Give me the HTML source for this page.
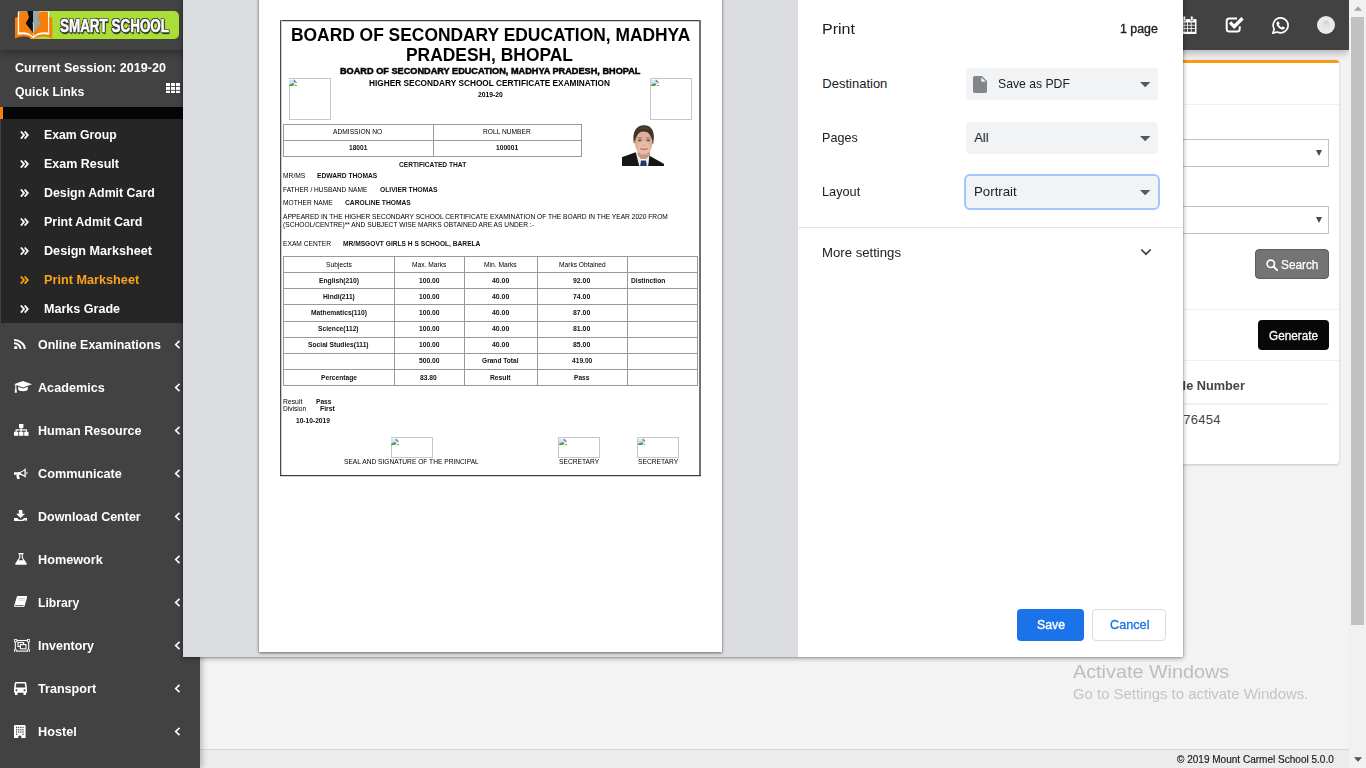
<!DOCTYPE html>
<html><head><meta charset="utf-8"><title>Print Marksheet</title>
<style>
*{box-sizing:border-box;margin:0;padding:0}
html,body{width:1366px;height:768px;overflow:hidden;background:#f3f3f3;font-family:"Liberation Sans",sans-serif;color:#444}
.a{position:absolute}
.t{position:absolute;white-space:nowrap;line-height:1}
/* ---------- app background ---------- */
#topbar{left:200px;top:0;width:1149px;height:50px;background:#424242;box-shadow:0 3px 8px rgba(0,0,0,.28)}
#sidebar{left:0;top:0;width:200px;height:768px;background:#424242;box-shadow:2px 0 6px rgba(0,0,0,.25)}
#sidehead{left:0;top:0;width:200px;height:50px;background:#424242;box-shadow:0 3px 7px rgba(0,0,0,.30)}
#footer{left:200px;top:749px;width:1149px;height:19px;background:#ececec;border-top:1px solid #d2d6de}
#scroll{left:1349px;top:0;width:17px;height:768px;background:#f1f1f1}
#thumb{left:1351px;top:17px;width:13px;height:608px;background:#c1c1c1}
.sub{font-size:14px;font-weight:bold;color:#fff;left:44px}
.main{font-size:14px;font-weight:bold;color:#fff;left:38px}
.tri{width:0;height:0;border-left:3.500px solid transparent;border-right:3.500px solid transparent;border-top:6px solid #4a4a4a}
/* ---------- dialog ---------- */
#dialog{left:183px;top:0;width:1000px;height:657px;background:#fff;box-shadow:0 0 1px rgba(0,0,0,.5),0 1px 5px rgba(0,0,0,.42)}
#preview{left:0;top:0;width:615px;height:657px;background:#dadce0;overflow:hidden}
#paper{left:76px;top:-4px;width:463px;height:656px;background:#fff;box-shadow:0 0 1px rgba(0,0,0,.35),0 1px 3px rgba(0,0,0,.5)}
#panel{left:615px;top:0;width:385px;height:657px;background:#fff}
.d{transform-origin:0 0}
.lbl{font-size:13px;color:#202124;left:24px}
.sel{left:168px;width:192px;height:32px;background:#f1f3f4;border-radius:4px}
.sel .t{font-size:13px;color:#202124;top:10px}
.caret{position:absolute;right:8px;top:14px;width:0;height:0;border-left:5px solid transparent;border-right:5px solid transparent;border-top:5px solid #474747}
</style></head><body>

<!-- page content behind dialog -->
<div class="a" id="card" style="left:900px;top:60px;width:439px;height:404px;background:#fff;border-top:3px solid #f89c13;border-radius:3px;box-shadow:0 1px 3px rgba(0,0,0,.2)"></div>
<div class="a" style="left:900px;top:104px;width:439px;height:1px;background:#f0f0f0"></div>
<div class="a" style="left:900px;top:139px;width:429px;height:28px;border:1px solid #c2c2c2;background:#fff"></div>
<div class="a" style="left:900px;top:206px;width:429px;height:28px;border:1px solid #c2c2c2;background:#fff"></div>
<div class="a tri" style="left:1316px;top:150px"></div><div class="a tri" style="left:1316px;top:217px"></div>
<div class="a" style="left:1255px;top:249px;width:74px;height:30px;background:#747474;border:1px solid #5e5e5e;border-radius:4px"></div>
<svg class="a" style="left:1266px;top:259px" width="12" height="12" viewBox="0 0 12 12"><circle cx="4.800" cy="4.800" r="3.700" fill="none" stroke="#fff" stroke-width="1.700"/><path d="M7.500 7.500L11 11" stroke="#fff" stroke-width="2" stroke-linecap="round"/></svg>
<div class="t" id="srch" style="left:1280.500px;top:258.500px;font-size:12.500px;color:#fff;-webkit-text-stroke:.25px #fff;transform:scaleX(.945);transform-origin:0 0">Search</div>
<div class="a" style="left:900px;top:309px;width:439px;height:1px;background:#f0f0f0"></div>
<div class="a" style="left:1258px;top:320px;width:71px;height:30px;background:#080808;border-radius:4px"></div>
<div class="t" id="gen" style="left:1269px;top:329.500px;font-size:12.500px;color:#fff;-webkit-text-stroke:.3px #fff;transform:scaleX(.94);transform-origin:0 0">Generate</div>
<div class="a" style="left:900px;top:360px;width:439px;height:1px;background:#f0f0f0"></div>
<div class="t" id="mob" style="right:121px;top:379px;font-size:13px;font-weight:bold;color:#444;transform:scaleX(.98);transform-origin:100% 0">Mobile Number</div>
<div class="a" style="left:900px;top:403px;width:429px;height:2px;background:#f2f2f2"></div>
<div class="t" id="num" style="right:145.200px;top:412.500px;font-size:13px;color:#444;letter-spacing:.28px">9067876454</div>
<div class="t" id="wm1" style="left:1073px;top:662.500px;font-size:18.500px;color:#bdbdbd;transform:scaleX(1.07);transform-origin:0 0">Activate Windows</div>
<div class="t" id="wm2" style="left:1073px;top:686.800px;font-size:14.500px;color:#c4c4c4;transform:scaleX(1.028);transform-origin:0 0">Go to Settings to activate Windows.</div>
<div class="a" id="topbar"></div>
<svg class="a" style="left:1179px;top:16px" width="18" height="18" viewBox="0 0 18 18"><path d="M1.500 3h15c.6 0 1 .4 1 1v13c0 .6-.4 1-1 1h-15c-.6 0-1-.4-1-1V4c0-.6.400-1 1-1z" fill="#fff"/><g fill="#424242"><rect x="2" y="6.500" width="2.600" height="2.300"/><rect x="5.400" y="6.500" width="2.800" height="2.300"/><rect x="9" y="6.500" width="2.800" height="2.300"/><rect x="12.600" y="6.500" width="3.400" height="2.300"/><rect x="2" y="9.600" width="2.600" height="2.600"/><rect x="5.400" y="9.600" width="2.800" height="2.600"/><rect x="9" y="9.600" width="2.800" height="2.600"/><rect x="12.600" y="9.600" width="3.400" height="2.600"/><rect x="2" y="13" width="2.600" height="2.800"/><rect x="5.400" y="13" width="2.800" height="2.800"/><rect x="9" y="13" width="2.800" height="2.800"/><rect x="12.600" y="13" width="3.400" height="2.800"/></g><rect x="4" y="0" width="2.600" height="5" rx="1.200" fill="#fff" stroke="#424242" stroke-width=".7"/><rect x="11.500" y="0" width="2.600" height="5" rx="1.200" fill="#fff" stroke="#424242" stroke-width=".7"/></svg>
<svg class="a" style="left:1225px;top:16px" width="19" height="17" viewBox="0 0 19 17"><path d="M12 2.400H4.200c-1.400 0-2.500 1.100-2.500 2.500v8c0 1.400 1.100 2.500 2.500 2.500h8c1.400 0 2.500-1.100 2.500-2.500V10.300" fill="none" stroke="#fff" stroke-width="2"/><path d="M3.900 7.600l2.300-2.300 3 3L16.300 1l2.400 2.400-9.500 9.700z" fill="#fff"/></svg>
<svg class="a" style="left:1272px;top:17px" width="17" height="17" viewBox="0 0 17 17"><path d="M8.700.8a7.500 7.500 0 0 0-6.500 11.300L.9 16.200l4.300-1.200A7.500 7.500 0 1 0 8.700.8z" fill="none" stroke="#fff" stroke-width="1.700"/><path d="M5.600 4.600c.3-.3.800-.3 1 0l.9 1.600c.1.300.1.600-.1.800l-.6.700c.6 1.200 1.500 2.100 2.700 2.700l.7-.700c.2-.2.600-.3.800-.1l1.600.9c.300.200.400.600.1 1-.7 1-1.700 1.300-2.800 1-2.600-.7-4.700-2.800-5.400-5.300-.2-1 .2-1.900 1.100-2.600z" fill="#fff"/></svg>
<div class="a" style="left:1317px;top:16px;width:18px;height:18px;border-radius:9px;background:#e9e9e9"></div>
<svg class="a" style="left:1321px;top:19px" width="10" height="11" viewBox="0 0 10 11"><path d="M2.500 3.500a2.500 2 0 0 1 5 0v1h-5z" fill="#d2d2d2"/><rect x="1.500" y="4.600" width="7" height=".9" fill="#cfcfcf"/><rect x=".5" y="7" width="9" height=".8" fill="#dcdcdc"/><rect x="2" y="9" width="6" height=".7" fill="#e0e0e0"/></svg>
<div class="a" id="footer"><div class="t" id="ftxt" style="left:977px;top:3.700px;font-size:11.500px;color:#222;-webkit-text-stroke:.2px #222;transform:scaleX(.872);transform-origin:0 0">© 2019 Mount Carmel School 5.0.0</div></div>

<div class="a" id="sidebar"></div>
<div class="a" id="sidehead"></div>
<!--SIDE-->
<div class="a" id="logo" style="left:30px;top:10.800px;width:149px;height:28.500px;background:#a9de37;border-radius:0 5px 5px 0"></div>
<div class="t" id="logot" style="left:60px;top:17.700px;font-size:17.500px;font-weight:bold;color:#fff;-webkit-text-stroke:.5px #fff;transform:scaleX(.768);transform-origin:0 0;text-shadow:1px 0 0 #333,-1px 0 0 #333,0 1px 0 #333,0 -1px 0 #333,1px 1px 0 #333,-1px 1px 0 #333,1px -1px 0 #333,-1px -1px 0 #333,1px 2px 1px #222">SMART SCHOOL</div>
<svg class="a" style="left:15px;top:11px" width="38" height="30" viewBox="0 0 38 30"><path d="M0 6.500L3.500 6H34l3.300.500V27.400C30 24.400 22.500 24.800 18.300 28.600 14.200 24.800 7.500 24.400 0 27.400z" fill="#f57f0b"/><path d="M2.800.4H34.200V23.700C27 22.300 21.500 23.600 18.300 27.400 15.200 23.600 10 22.300 2.800 23.700z" fill="#fff"/><path d="M4.100 1.100C8 .3 11 .5 13 1.300H18V25.600C15 21.800 10 20.600 4.100 21.500z" fill="#f57f0b"/><path d="M33.100 1.100C29 .3 26 .5 24 1.300H18.600V25.600C21.600 21.800 27 20.600 33.100 21.500z" fill="#f57f0b"/><path d="M12.200 0H18.300V22.300L10.600 12.300 14 6.500z" fill="#0d0d0d"/><path d="M18.300 0H24.600L23 6.500 25.500 12.300 18.300 22.300z" fill="#93a7ad"/><path d="M17.900 11.300a.9.900 0 1 0 .8 0V21h-.8z" fill="#eee"/></svg>
<div class="t" style="left:14.9px;top:60.66px;font-size:13.4px;font-weight:bold;color:#fff;transform:scaleX(0.9387);transform-origin:0 0">Current Session: 2019-20</div>
<div class="t" style="left:14.9px;top:84.56px;font-size:13.4px;font-weight:bold;color:#fff;transform:scaleX(0.9143);transform-origin:0 0">Quick Links</div>
<svg class="a" style="left:165.800px;top:82.600px" width="14" height="10.800" viewBox="0 0 14 10.800"><g fill="#fff"><rect x="0" y="0" width="4" height="3"/><rect x="5" y="0" width="4" height="3"/><rect x="10" y="0" width="4" height="3"/><rect x="0" y="3.900" width="4" height="3"/><rect x="5" y="3.900" width="4" height="3"/><rect x="10" y="3.900" width="4" height="3"/><rect x="0" y="7.800" width="4" height="3"/><rect x="5" y="7.800" width="4" height="3"/><rect x="10" y="7.800" width="4" height="3"/></g></svg>
<div class="a" style="left:0;top:107px;width:200px;height:12px;background:#060606;border-left:3px solid #f5810c"></div>
<div class="a" style="left:1px;top:119px;width:199px;height:204px;background:#262626"></div>
<svg class="a" style="left:20px;top:131px" width="8.800" height="8.200" viewBox="0 0 8.500 8"><path d="M.8.500L3.900 4 .8 7.500M4.500.5L7.600 4 4.500 7.500" fill="none" stroke="#fff" stroke-width="1.700"/></svg>
<div class="t" style="left:44.4px;top:127.66px;font-size:13.4px;font-weight:bold;color:#fff;transform:scaleX(0.9144);transform-origin:0 0">Exam Group</div>
<svg class="a" style="left:20px;top:160px" width="8.800" height="8.200" viewBox="0 0 8.500 8"><path d="M.8.500L3.900 4 .8 7.500M4.500.5L7.600 4 4.500 7.500" fill="none" stroke="#fff" stroke-width="1.700"/></svg>
<div class="t" style="left:44.4px;top:156.66px;font-size:13.4px;font-weight:bold;color:#fff;transform:scaleX(0.9331);transform-origin:0 0">Exam Result</div>
<svg class="a" style="left:20px;top:189px" width="8.800" height="8.200" viewBox="0 0 8.500 8"><path d="M.8.500L3.900 4 .8 7.500M4.500.5L7.600 4 4.500 7.500" fill="none" stroke="#fff" stroke-width="1.700"/></svg>
<div class="t" style="left:44.4px;top:185.66px;font-size:13.4px;font-weight:bold;color:#fff;transform:scaleX(0.9226);transform-origin:0 0">Design Admit Card</div>
<svg class="a" style="left:20px;top:218px" width="8.800" height="8.200" viewBox="0 0 8.500 8"><path d="M.8.500L3.900 4 .8 7.500M4.500.5L7.600 4 4.500 7.500" fill="none" stroke="#fff" stroke-width="1.700"/></svg>
<div class="t" style="left:44.4px;top:214.66px;font-size:13.4px;font-weight:bold;color:#fff;transform:scaleX(0.9296);transform-origin:0 0">Print Admit Card</div>
<svg class="a" style="left:20px;top:247px" width="8.800" height="8.200" viewBox="0 0 8.500 8"><path d="M.8.500L3.900 4 .8 7.500M4.500.5L7.600 4 4.500 7.500" fill="none" stroke="#fff" stroke-width="1.700"/></svg>
<div class="t" style="left:44.4px;top:243.66px;font-size:13.4px;font-weight:bold;color:#fff;transform:scaleX(0.9424);transform-origin:0 0">Design Marksheet</div>
<svg class="a" style="left:20px;top:276px" width="8.800" height="8.200" viewBox="0 0 8.500 8"><path d="M.8.500L3.900 4 .8 7.500M4.500.5L7.600 4 4.500 7.500" fill="none" stroke="#faa21c" stroke-width="1.700"/></svg>
<div class="t" style="left:44.4px;top:272.66px;font-size:13.4px;font-weight:bold;color:#faa21c;transform:scaleX(0.9476);transform-origin:0 0">Print Marksheet</div>
<svg class="a" style="left:20px;top:305px" width="8.800" height="8.200" viewBox="0 0 8.500 8"><path d="M.8.500L3.900 4 .8 7.500M4.500.5L7.600 4 4.500 7.500" fill="none" stroke="#fff" stroke-width="1.700"/></svg>
<div class="t" style="left:44.4px;top:301.66px;font-size:13.4px;font-weight:bold;color:#fff;transform:scaleX(0.9380);transform-origin:0 0">Marks Grade</div>
<svg class="a" style="left:14.2px;top:338.8px" width="12" height="10.3" viewBox="0 0 12 10.3"><circle cx="1.700" cy="8.600" r="1.700" fill="#fff"/><path d="M0 4.300a6.600 5.900 0 0 1 6.600 5.900" fill="none" stroke="#fff" stroke-width="2.100"/><path d="M0 1a10.800 9.200 0 0 1 10.800 9.200" fill="none" stroke="#fff" stroke-width="2"/></svg>
<div class="t" style="left:38.2px;top:337.66px;font-size:13.4px;font-weight:bold;color:#fff;transform:scaleX(0.9279);transform-origin:0 0">Online Examinations</div>
<svg class="a" style="left:173.800px;top:339.8px" width="7" height="9" viewBox="0 0 7 9"><path d="M5.500.8L1.700 4.500l3.800 3.700" fill="none" stroke="#fff" stroke-width="1.650"/></svg>
<svg class="a" style="left:14.2px;top:381.1px" width="18" height="12" viewBox="0 0 18 12"><path d="M0 3.200L9 0l9 3.200L9 6.400z" fill="#fff"/><path d="M4.200 5.700v2.500c0 1.200 2.200 2 4.800 2s4.800-.8 4.800-2V5.700L9 7.500z" fill="#fff"/><path d="M1.800 4v5" stroke="#fff" stroke-width="1.100"/><path d="M1 8.300h1.600l.3 3.500H.7z" fill="#fff"/></svg>
<div class="t" style="left:38.2px;top:380.66px;font-size:13.4px;font-weight:bold;color:#fff;transform:scaleX(0.9433);transform-origin:0 0">Academics</div>
<svg class="a" style="left:173.800px;top:382.8px" width="7" height="9" viewBox="0 0 7 9"><path d="M5.500.8L1.700 4.500l3.800 3.700" fill="none" stroke="#fff" stroke-width="1.650"/></svg>
<svg class="a" style="left:14.2px;top:424.4px" width="14.5" height="11.8" viewBox="0 0 14.5 11.8"><rect x="5" y="0" width="4.400" height="4" fill="#fff"/><rect x="0" y="7.800" width="4.300" height="4" fill="#fff"/><rect x="5.100" y="7.800" width="4.300" height="4" fill="#fff"/><rect x="10.200" y="7.800" width="4.300" height="4" fill="#fff"/><path d="M7.200 4v4M2.100 8V5.900h10.200V8" fill="none" stroke="#fff" stroke-width="1.200"/></svg>
<div class="t" style="left:38.2px;top:423.66px;font-size:13.4px;font-weight:bold;color:#fff;transform:scaleX(0.9407);transform-origin:0 0">Human Resource</div>
<svg class="a" style="left:173.800px;top:425.8px" width="7" height="9" viewBox="0 0 7 9"><path d="M5.500.8L1.700 4.500l3.800 3.700" fill="none" stroke="#fff" stroke-width="1.650"/></svg>
<svg class="a" style="left:14.2px;top:467.5px" width="14.5" height="11.5" viewBox="0 0 14.500 11.5"><path d="M0 4.300h3.500C7 4.100 9.500 2.400 11.700 0V9.800C9.500 7.700 7 6.700 3.500 6.700H0z" fill="#fff"/><path d="M2.200 6.800l1 4.700h2.700L4.800 6.800z" fill="#fff"/><path d="M12.500 3.400a1.800 1.800 0 0 1 0 3.300z" fill="#fff"/><path d="M6.600 4.700C8 4.300 9.300 3.500 10.400 2.500V7.400C9.300 6.500 8 5.900 6.600 5.600z" fill="#424242"/></svg>
<div class="t" style="left:38.2px;top:466.66px;font-size:13.4px;font-weight:bold;color:#fff;transform:scaleX(0.9476);transform-origin:0 0">Communicate</div>
<svg class="a" style="left:173.800px;top:468.8px" width="7" height="9" viewBox="0 0 7 9"><path d="M5.500.8L1.700 4.500l3.800 3.700" fill="none" stroke="#fff" stroke-width="1.650"/></svg>
<svg class="a" style="left:14.2px;top:509.5px" width="13.2" height="11.7" viewBox="0 0 13.2 11.7"><path d="M4.800 0h3.600v3.800h2.700L6.600 8 2.100 3.800h2.700z" fill="#fff"/><path d="M0 8h3.200l1.800 1.700h3.200L10 8h3.200v3.700H0z" fill="#fff"/><rect x="9.700" y="9.800" width="1" height="1" fill="#424242"/><rect x="11.300" y="9.800" width="1" height="1" fill="#424242"/></svg>
<div class="t" style="left:38.2px;top:509.66px;font-size:13.4px;font-weight:bold;color:#fff;transform:scaleX(0.9327);transform-origin:0 0">Download Center</div>
<svg class="a" style="left:173.800px;top:511.8px" width="7" height="9" viewBox="0 0 7 9"><path d="M5.500.8L1.700 4.500l3.800 3.700" fill="none" stroke="#fff" stroke-width="1.650"/></svg>
<svg class="a" style="left:15px;top:553.4px" width="12" height="11.7" viewBox="0 0 12 11.700"><path d="M3.500 0h5v1.200h-.7v3.300L11.700 10.400c.5.800 0 1.300-.8 1.300H1.100c-.8 0-1.300-.5-.8-1.300L4.200 4.500V1.200h-.7z" fill="#fff"/><path d="M5.300 1.200h1.400v3.600l1.500 2.500H3.800l1.500-2.500z" fill="#424242"/></svg>
<div class="t" style="left:38.2px;top:552.66px;font-size:13.4px;font-weight:bold;color:#fff;transform:scaleX(0.9466);transform-origin:0 0">Homework</div>
<svg class="a" style="left:173.800px;top:554.8px" width="7" height="9" viewBox="0 0 7 9"><path d="M5.500.8L1.700 4.500l3.800 3.700" fill="none" stroke="#fff" stroke-width="1.650"/></svg>
<svg class="a" style="left:14.2px;top:596.0px" width="13.2" height="12.3" viewBox="0 0 13.2 12.3"><path d="M3.800 0h8.600c.6 0 .9.500.7 1.100l-2.500 9c-.2.600-.8 1-1.400 1H1.300c-.9 0-1.400-.7-1.100-1.500L2.700 1.200C2.900.5 3.200 0 3.800 0z" fill="#fff"/><path d="M1.200 9.700h8.300" stroke="#424242" stroke-width=".9"/><path d="M4.800 2.500h6M4.300 4.100h6" stroke="#bbb" stroke-width=".7"/></svg>
<div class="t" style="left:38.2px;top:595.66px;font-size:13.4px;font-weight:bold;color:#fff;transform:scaleX(0.9098);transform-origin:0 0">Library</div>
<svg class="a" style="left:173.800px;top:597.8px" width="7" height="9" viewBox="0 0 7 9"><path d="M5.500.8L1.700 4.500l3.800 3.700" fill="none" stroke="#fff" stroke-width="1.650"/></svg>
<svg class="a" style="left:14.2px;top:638.6px" width="16.1" height="13.6" viewBox="0 0 16.1 13.6"><rect x="1.300" y="1.500" width="13.400" height="10.600" fill="none" stroke="#fff" stroke-width="1.100"/><rect x=".4" y=".4" width="2.400" height="2.400" fill="#424242" stroke="#fff" stroke-width=".8"/><rect x="13.300" y=".4" width="2.400" height="2.400" fill="#424242" stroke="#fff" stroke-width=".8"/><rect x=".4" y="10.800" width="2.400" height="2.400" fill="#424242" stroke="#fff" stroke-width=".8"/><rect x="13.300" y="10.800" width="2.400" height="2.400" fill="#424242" stroke="#fff" stroke-width=".8"/><rect x="4" y="3.500" width="5.600" height="4" fill="none" stroke="#fff" stroke-width="1.100"/><rect x="6.400" y="5.600" width="5.600" height="4.200" fill="#424242" stroke="#fff" stroke-width="1.100"/></svg>
<div class="t" style="left:38.2px;top:638.66px;font-size:13.4px;font-weight:bold;color:#fff;transform:scaleX(0.9291);transform-origin:0 0">Inventory</div>
<svg class="a" style="left:173.800px;top:640.8px" width="7" height="9" viewBox="0 0 7 9"><path d="M5.500.8L1.700 4.500l3.800 3.700" fill="none" stroke="#fff" stroke-width="1.650"/></svg>
<svg class="a" style="left:14.2px;top:681.5px" width="13" height="13.5" viewBox="0 0 13 13.500"><path d="M2.200 0h8.600c.8 0 1.300.5 1.500 1.300L13 6.500v4.300h-1v1.800c0 .5-.4.900-.9.900h-.7c-.5 0-.9-.4-.9-.9v-1.800h-6v1.800c0 .5-.4.900-.9.900h-.7c-.5 0-.9-.4-.9-.9v-1.800H0V6.500L.7 1.300C.9.500 1.400 0 2.200 0z" fill="#fff"/><path d="M2.300 1.600h8.400l.6 4H1.700z" fill="#424242"/><circle cx="2.500" cy="8.300" r="1" fill="#424242"/><circle cx="10.500" cy="8.300" r="1" fill="#424242"/></svg>
<div class="t" style="left:38.2px;top:681.66px;font-size:13.4px;font-weight:bold;color:#fff;transform:scaleX(0.9408);transform-origin:0 0">Transport</div>
<svg class="a" style="left:173.800px;top:683.8px" width="7" height="9" viewBox="0 0 7 9"><path d="M5.500.8L1.700 4.500l3.800 3.700" fill="none" stroke="#fff" stroke-width="1.650"/></svg>
<svg class="a" style="left:14.2px;top:724.7px" width="11.6" height="13.3" viewBox="0 0 11.6 13.3"><path d="M.8 0h10c.4 0 .8.300.8.800v12.500H7.300v-2.500h-3v2.500H0V.8C0 .3.400 0 .8 0z" fill="#fff"/><g fill="#424242"><rect x="2" y="1.800" width="1.200" height="1.300"/><rect x="4.100" y="1.800" width="1.200" height="1.300"/><rect x="6.300" y="1.800" width="1.200" height="1.300"/><rect x="8.400" y="1.800" width="1.200" height="1.300"/><rect x="2" y="4.100" width="1.200" height="1.300"/><rect x="4.100" y="4.100" width="1.200" height="1.300"/><rect x="6.300" y="4.100" width="1.200" height="1.300"/><rect x="8.400" y="4.100" width="1.200" height="1.300"/><rect x="2" y="6.400" width="1.200" height="1.300"/><rect x="4.100" y="6.400" width="1.200" height="1.300"/><rect x="6.300" y="6.400" width="1.200" height="1.300"/><rect x="8.400" y="6.400" width="1.200" height="1.300"/><rect x="2" y="8.700" width="1.200" height="1.300"/><rect x="8.400" y="8.700" width="1.200" height="1.300"/></g></svg>
<div class="t" style="left:38.2px;top:724.66px;font-size:13.4px;font-weight:bold;color:#fff;transform:scaleX(0.9505);transform-origin:0 0">Hostel</div>
<svg class="a" style="left:173.800px;top:726.8px" width="7" height="9" viewBox="0 0 7 9"><path d="M5.500.8L1.700 4.500l3.800 3.700" fill="none" stroke="#fff" stroke-width="1.650"/></svg>
<!--/SIDE-->

<div class="a" id="scroll"></div>
<div class="a" id="thumb"></div>
<svg class="a" style="left:1353.500px;top:6.300px" width="8" height="5" viewBox="0 0 8 5"><path d="M0 4.700L4 .3l4 4.400z" fill="#a3a3a3"/></svg>
<svg class="a" style="left:1353.500px;top:757px" width="8" height="5" viewBox="0 0 8 5"><path d="M0 .3L4 4.700 8 .3z" fill="#505050"/></svg>

<!-- print dialog -->
<div class="a" id="dialog">
  <div class="a" id="preview">
    <div class="a" id="paper"></div>
<!--DOC--><div class="a" id="doc" style="left:-183px;top:0;width:1366px;height:768px">
<div class="a" style="left:280px;top:20px;width:421px;height:2px;background:linear-gradient(#414141 50%,#d2d2d2 50%)"></div>
<div class="a" style="left:280px;top:20px;width:2px;height:456px;background:linear-gradient(90deg,#4d4d4d 50%,#c8c8c8 50%)"></div>
<div class="a" style="left:699px;top:20px;width:2px;height:456px;background:#737373"></div>
<div class="a" style="left:280px;top:475px;width:421px;height:2px;background:linear-gradient(#393939 50%,#d6d6d6 50%)"></div>
<div class="a" style="left:283.0px;top:124.00px;width:299.00px;height:1px;background:#999"></div>
<div class="a" style="left:283.0px;top:139.80px;width:299.00px;height:1px;background:#999"></div>
<div class="a" style="left:283.0px;top:155.80px;width:299.00px;height:1px;background:#999"></div>
<div class="a" style="left:283.00px;top:124.5px;width:1px;height:31.80px;background:#999"></div>
<div class="a" style="left:433.00px;top:124.5px;width:1px;height:31.80px;background:#999"></div>
<div class="a" style="left:581.10px;top:124.5px;width:1px;height:31.80px;background:#999"></div>
<div class="a" style="left:283.0px;top:256.00px;width:414.80px;height:1px;background:#999"></div>
<div class="a" style="left:283.0px;top:272.00px;width:414.80px;height:1px;background:#999"></div>
<div class="a" style="left:283.0px;top:287.90px;width:414.80px;height:1px;background:#999"></div>
<div class="a" style="left:283.0px;top:304.00px;width:414.80px;height:1px;background:#999"></div>
<div class="a" style="left:283.0px;top:320.70px;width:414.80px;height:1px;background:#999"></div>
<div class="a" style="left:283.0px;top:336.90px;width:414.80px;height:1px;background:#999"></div>
<div class="a" style="left:283.0px;top:352.90px;width:414.80px;height:1px;background:#999"></div>
<div class="a" style="left:283.0px;top:369.10px;width:414.80px;height:1px;background:#999"></div>
<div class="a" style="left:283.0px;top:384.90px;width:414.80px;height:1px;background:#999"></div>
<div class="a" style="left:283.00px;top:256.5px;width:1px;height:128.90px;background:#999"></div>
<div class="a" style="left:394.00px;top:256.5px;width:1px;height:128.90px;background:#999"></div>
<div class="a" style="left:463.80px;top:256.5px;width:1px;height:128.90px;background:#999"></div>
<div class="a" style="left:536.80px;top:256.5px;width:1px;height:128.90px;background:#999"></div>
<div class="a" style="left:627.20px;top:256.5px;width:1px;height:128.90px;background:#999"></div>
<div class="a" style="left:696.80px;top:256.5px;width:1px;height:128.90px;background:#999"></div>
<div class="a" style="left:288.7px;top:78.2px;width:42.2px;height:41.8px;border:1px solid #c6c6c6;background:#fff"></div>
<svg class="a" style="left:289.40px;top:78.80px" width="7.700" height="7.400" viewBox="0 0 7.700 7.400"><path d="M0 .4h5.200l2.500 2.600v4.400H0z" fill="#fff"/><path d="M.2 .9h4.800l1.700 2v2.200L4 5.600.2 6.800z" fill="#c6daf9"/><path d="M.8 1.500h2.800v1.300H.8z" fill="#e3ecfd"/><path d="M0 7.400V6.300C1 5.200 2.300 4.500 3.900 4.500c.9 0 1.500.3 1.300.9C4.700 6.500 3.200 7.400 2 7.400z" fill="#3ea42b"/><path d="M5 7.400c.5-.8 1.400-1.400 2.700-1.600v1.600z" fill="#479a35"/><path d="M4.900 .2L7.700 3v1.200l-.8-.3V3.300L5.200 3 4.700 1z" fill="#7c7f84"/></svg>
<div class="a" style="left:650.2px;top:78.2px;width:41.9px;height:41.8px;border:1px solid #c6c6c6;background:#fff"></div>
<svg class="a" style="left:650.90px;top:78.80px" width="7.700" height="7.400" viewBox="0 0 7.700 7.400"><path d="M0 .4h5.200l2.500 2.600v4.400H0z" fill="#fff"/><path d="M.2 .9h4.800l1.700 2v2.200L4 5.600.2 6.800z" fill="#c6daf9"/><path d="M.8 1.500h2.800v1.300H.8z" fill="#e3ecfd"/><path d="M0 7.400V6.300C1 5.200 2.300 4.500 3.900 4.500c.9 0 1.500.3 1.300.9C4.700 6.500 3.200 7.400 2 7.400z" fill="#3ea42b"/><path d="M5 7.400c.5-.8 1.400-1.400 2.700-1.600v1.600z" fill="#479a35"/><path d="M4.900 .2L7.700 3v1.200l-.8-.3V3.300L5.200 3 4.700 1z" fill="#7c7f84"/></svg>
<div class="a" style="left:390.6px;top:436.9px;width:42px;height:20.7px;border:1px solid #c6c6c6;background:#fff"></div>
<svg class="a" style="left:391.30px;top:437.50px" width="7.700" height="7.400" viewBox="0 0 7.700 7.400"><path d="M0 .4h5.200l2.500 2.600v4.400H0z" fill="#fff"/><path d="M.2 .9h4.800l1.700 2v2.200L4 5.600.2 6.800z" fill="#c6daf9"/><path d="M.8 1.500h2.800v1.300H.8z" fill="#e3ecfd"/><path d="M0 7.400V6.300C1 5.200 2.300 4.500 3.900 4.500c.9 0 1.500.3 1.300.9C4.700 6.500 3.200 7.400 2 7.400z" fill="#3ea42b"/><path d="M5 7.400c.5-.8 1.400-1.400 2.700-1.600v1.600z" fill="#479a35"/><path d="M4.900 .2L7.700 3v1.200l-.8-.3V3.300L5.200 3 4.700 1z" fill="#7c7f84"/></svg>
<div class="a" style="left:558.4px;top:436.9px;width:42px;height:20.7px;border:1px solid #c6c6c6;background:#fff"></div>
<svg class="a" style="left:559.10px;top:437.50px" width="7.700" height="7.400" viewBox="0 0 7.700 7.400"><path d="M0 .4h5.200l2.500 2.600v4.400H0z" fill="#fff"/><path d="M.2 .9h4.800l1.700 2v2.200L4 5.600.2 6.800z" fill="#c6daf9"/><path d="M.8 1.500h2.800v1.300H.8z" fill="#e3ecfd"/><path d="M0 7.400V6.300C1 5.200 2.300 4.500 3.900 4.500c.9 0 1.500.3 1.300.9C4.700 6.500 3.200 7.400 2 7.400z" fill="#3ea42b"/><path d="M5 7.400c.5-.8 1.400-1.400 2.700-1.600v1.600z" fill="#479a35"/><path d="M4.900 .2L7.700 3v1.200l-.8-.3V3.300L5.200 3 4.700 1z" fill="#7c7f84"/></svg>
<div class="a" style="left:637.1px;top:436.9px;width:42px;height:20.7px;border:1px solid #c6c6c6;background:#fff"></div>
<svg class="a" style="left:637.80px;top:437.50px" width="7.700" height="7.400" viewBox="0 0 7.700 7.400"><path d="M0 .4h5.200l2.500 2.600v4.400H0z" fill="#fff"/><path d="M.2 .9h4.800l1.700 2v2.200L4 5.600.2 6.800z" fill="#c6daf9"/><path d="M.8 1.500h2.800v1.300H.8z" fill="#e3ecfd"/><path d="M0 7.400V6.300C1 5.200 2.300 4.500 3.900 4.500c.9 0 1.500.3 1.300.9C4.700 6.500 3.200 7.400 2 7.400z" fill="#3ea42b"/><path d="M5 7.400c.5-.8 1.400-1.400 2.700-1.600v1.600z" fill="#479a35"/><path d="M4.900 .2L7.700 3v1.200l-.8-.3V3.300L5.200 3 4.700 1z" fill="#7c7f84"/></svg>
<svg class="a" style="left:621.900px;top:124.700px" width="42" height="41.100" viewBox="0 0 84 82"><defs><filter id="pb" x="-5%" y="-5%" width="110%" height="110%"><feGaussianBlur stdDeviation="1.100"/></filter><clipPath id="pc"><rect width="84" height="82"/></clipPath></defs><g clip-path="url(#pc)"><g filter="url(#pb)"><rect x="-4" y="-4" width="92" height="90" fill="#fff"/><path d="M31 40h25v28H31z" fill="#c9987f"/><path d="M27 54l15 20 13-13-2 23H32z" fill="#e9edf2"/><path d="M38 71h10l2 13H36z" fill="#2a3663"/><path d="M-2 65L27.500 54.500 35 84H-2z" fill="#131318"/><path d="M86 79L55 61.500 52 84h34z" fill="#131318"/><path d="M23.500 36C20 14 28 .5 44 .5 59 .5 66 12 63 34L61.500 38z" fill="#43342a"/><ellipse cx="43.400" cy="36" rx="17.300" ry="23.600" fill="#deb09a"/><ellipse cx="43.400" cy="45" rx="12.500" ry="13" fill="#e6bca6"/><path d="M26 28C25.500 17 29 11.500 35 9.500 42 7.500 51 9 56 10.500 60 14 61.500 20 61 28 60 22 58.500 18 56 15 50 13 42 12 36 13.500 30 15 27 20 26 28z" fill="#43342a"/><path d="M31 8c6-4 19-4.500 25 0-8-1.500-17-1.500-25 0z" fill="#5a4838"/><ellipse cx="35.600" cy="30" rx="5" ry="3" fill="#cf9f88" opacity=".7"/><ellipse cx="52.600" cy="30" rx="5" ry="3" fill="#cf9f88" opacity=".7"/><ellipse cx="35.600" cy="30.500" rx="3.200" ry="1.700" fill="#5a4438"/><ellipse cx="52.600" cy="30.500" rx="3.200" ry="1.700" fill="#5a4438"/><path d="M31 26.500c3-1.500 6-1.500 9 0M48 26.500c3-1.500 6-1.500 9 0" stroke="#6b5142" stroke-width="1.300" fill="none"/><path d="M36 47c5 3 11 3 16 0-5 1.200-11 1.200-16 0z" fill="#b0685f" stroke="#b0685f" stroke-width="1"/><path d="M41 40c2 1.200 4 1.200 6 0" stroke="#c99079" stroke-width="1.200" fill="none"/><path d="M25 30c-2 0-2 8 1 10zM62 30c2 0 2 8-1 10z" fill="#d6a58c"/></g></g></svg>
<div class="t d" style="left:290.55px;top:25.68px;font-size:18.1px;color:#000;transform:scaleX(0.9615);font-weight:bold">BOARD OF SECONDARY EDUCATION, MADHYA</div>
<div class="t d" style="left:406.45px;top:45.68px;font-size:18.1px;color:#000;transform:scaleX(0.9621);font-weight:bold">PRADESH, BHOPAL</div>
<div class="t d" style="left:339.75px;top:67.31px;font-size:8.37px;color:#000;transform:scaleX(1.0963);font-weight:bold;-webkit-text-stroke:.45px #000">BOARD OF SECONDARY EDUCATION, MADHYA PRADESH, BHOPAL</div>
<div class="t d" style="left:369.15px;top:79.16px;font-size:8.32px;color:#000;transform:scaleX(0.9978);font-weight:bold">HIGHER SECONDARY SCHOOL CERTIFICATE EXAMINATION</div>
<div class="t d" style="left:477.55px;top:91.88px;font-size:6.76px;color:#000;transform:scaleX(1.0011);font-weight:bold">2019-20</div>
<div class="t d" style="left:333.45px;top:129.48px;font-size:6.76px;color:#000;transform:scaleX(0.9864)">ADMISSION NO</div>
<div class="t d" style="left:483.25px;top:129.48px;font-size:6.76px;color:#000;transform:scaleX(0.9844)">ROLL NUMBER</div>
<div class="t d" style="left:349.15px;top:145.48px;font-size:6.76px;color:#111;transform:scaleX(0.9750);font-weight:bold">18001</div>
<div class="t d" style="left:496.05px;top:145.48px;font-size:6.76px;color:#111;transform:scaleX(0.9856);font-weight:bold">100001</div>
<div class="t d" style="left:398.55px;top:162.48px;font-size:6.76px;color:#111;transform:scaleX(0.9830);font-weight:bold">CERTIFICATED THAT</div>
<div class="t d" style="left:282.95px;top:172.58px;font-size:6.76px;color:#000;transform:scaleX(0.9912)">MR/MS</div>
<div class="t d" style="left:317.25px;top:172.58px;font-size:6.76px;color:#111;transform:scaleX(0.9866);font-weight:bold">EDWARD THOMAS</div>
<div class="t d" style="left:282.95px;top:187.48px;font-size:6.76px;color:#000;transform:scaleX(0.9787)">FATHER / HUSBAND NAME</div>
<div class="t d" style="left:379.75px;top:187.48px;font-size:6.76px;color:#111;transform:scaleX(0.9892);font-weight:bold">OLIVIER THOMAS</div>
<div class="t d" style="left:282.95px;top:200.48px;font-size:6.76px;color:#000;transform:scaleX(0.9817)">MOTHER NAME</div>
<div class="t d" style="left:344.75px;top:200.48px;font-size:6.76px;color:#111;transform:scaleX(0.9914);font-weight:bold">CAROLINE THOMAS</div>
<div class="t d" style="left:282.95px;top:214.38px;font-size:6.76px;color:#000;transform:scaleX(0.9825)">APPEARED IN THE HIGHER SECONDARY SCHOOL CERTIFICATE EXAMINATION OF THE BOARD IN THE YEAR 2020 FROM</div>
<div class="t d" style="left:282.95px;top:221.68px;font-size:6.76px;color:#000;transform:scaleX(0.9846)">(SCHOOL/CENTRE)** AND SUBJECT WISE MARKS OBTAINED ARE AS UNDER :-</div>
<div class="t d" style="left:282.95px;top:241.28px;font-size:6.76px;color:#000;transform:scaleX(0.9865)">EXAM CENTER</div>
<div class="t d" style="left:343.15px;top:241.28px;font-size:6.76px;color:#111;transform:scaleX(0.9823);font-weight:bold">MR/MSGOVT GIRLS H S SCHOOL, BARELA</div>
<div class="t d" style="left:325.65px;top:262.38px;font-size:6.76px;color:#000;transform:scaleX(0.9966)">Subjects</div>
<div class="t d" style="left:411.65px;top:262.38px;font-size:6.76px;color:#000;transform:scaleX(0.9863)">Max. Marks</div>
<div class="t d" style="left:484.15px;top:262.38px;font-size:6.76px;color:#000;transform:scaleX(0.9909)">Min. Marks</div>
<div class="t d" style="left:558.55px;top:262.38px;font-size:6.76px;color:#000;transform:scaleX(0.9802)">Marks Obtained</div>
<div class="t d" style="left:318.65px;top:278.28px;font-size:6.76px;color:#111;transform:scaleX(0.9967);font-weight:bold">English(210)</div>
<div class="t d" style="left:631.15px;top:278.28px;font-size:6.76px;color:#111;transform:scaleX(0.9835);font-weight:bold">Distinction</div>
<div class="t d" style="left:322.85px;top:294.38px;font-size:6.76px;color:#111;transform:scaleX(0.9859);font-weight:bold">Hindi(211)</div>
<div class="t d" style="left:310.55px;top:310.48px;font-size:6.76px;color:#111;transform:scaleX(0.9934);font-weight:bold">Mathematics(110)</div>
<div class="t d" style="left:318.45px;top:325.58px;font-size:6.76px;color:#111;transform:scaleX(0.9926);font-weight:bold">Science(112)</div>
<div class="t d" style="left:308.45px;top:341.58px;font-size:6.76px;color:#111;transform:scaleX(0.9910);font-weight:bold">Social Studies(111)</div>
<div class="t d" style="left:418.85px;top:358.48px;font-size:6.76px;color:#111;transform:scaleX(0.9930);font-weight:bold">500.00</div>
<div class="t d" style="left:482.45px;top:358.48px;font-size:6.76px;color:#111;transform:scaleX(0.9766);font-weight:bold">Grand Total</div>
<div class="t d" style="left:571.75px;top:358.48px;font-size:6.76px;color:#111;transform:scaleX(0.9833);font-weight:bold">419.00</div>
<div class="t d" style="left:320.75px;top:374.78px;font-size:6.76px;color:#111;transform:scaleX(0.9892);font-weight:bold">Percentage</div>
<div class="t d" style="left:420.45px;top:374.78px;font-size:6.76px;color:#111;transform:scaleX(0.9946);font-weight:bold">83.80</div>
<div class="t d" style="left:490.45px;top:374.78px;font-size:6.76px;color:#111;transform:scaleX(0.9986);font-weight:bold">Result</div>
<div class="t d" style="left:574.35px;top:374.78px;font-size:6.76px;color:#111;transform:scaleX(0.9769);font-weight:bold">Pass</div>
<div class="t d" style="left:282.95px;top:399.28px;font-size:6.76px;color:#000;transform:scaleX(1.0087)">Result</div>
<div class="t d" style="left:315.75px;top:399.28px;font-size:6.76px;color:#111;transform:scaleX(0.9832);font-weight:bold">Pass</div>
<div class="t d" style="left:282.95px;top:406.28px;font-size:6.76px;color:#000;transform:scaleX(0.9817)">Division</div>
<div class="t d" style="left:320.35px;top:406.28px;font-size:6.76px;color:#111;transform:scaleX(1.0187);font-weight:bold">First</div>
<div class="t d" style="left:295.55px;top:418.48px;font-size:6.76px;color:#111;transform:scaleX(0.9818);font-weight:bold">10-10-2019</div>
<div class="t d" style="left:343.55px;top:459.28px;font-size:6.76px;color:#000;transform:scaleX(0.9835)">SEAL AND SIGNATURE OF THE PRINCIPAL</div>
<div class="t d" style="left:559.35px;top:459.28px;font-size:6.76px;color:#000;transform:scaleX(0.9869)">SECRETARY</div>
<div class="t d" style="left:638.15px;top:459.28px;font-size:6.76px;color:#000;transform:scaleX(0.9869)">SECRETARY</div>
<div class="t d" style="left:418.85px;top:278.28px;font-size:6.76px;color:#111;transform:scaleX(0.9930);font-weight:bold">100.00</div>
<div class="t d" style="left:492.05px;top:278.28px;font-size:6.76px;color:#111;transform:scaleX(1.0183);font-weight:bold">40.00</div>
<div class="t d" style="left:573.45px;top:278.28px;font-size:6.76px;color:#111;transform:scaleX(1.0183);font-weight:bold">92.00</div>
<div class="t d" style="left:418.85px;top:294.38px;font-size:6.76px;color:#111;transform:scaleX(0.9930);font-weight:bold">100.00</div>
<div class="t d" style="left:492.05px;top:294.38px;font-size:6.76px;color:#111;transform:scaleX(1.0183);font-weight:bold">40.00</div>
<div class="t d" style="left:573.45px;top:294.38px;font-size:6.76px;color:#111;transform:scaleX(1.0183);font-weight:bold">74.00</div>
<div class="t d" style="left:418.85px;top:310.48px;font-size:6.76px;color:#111;transform:scaleX(0.9930);font-weight:bold">100.00</div>
<div class="t d" style="left:492.05px;top:310.48px;font-size:6.76px;color:#111;transform:scaleX(1.0183);font-weight:bold">40.00</div>
<div class="t d" style="left:573.45px;top:310.48px;font-size:6.76px;color:#111;transform:scaleX(1.0183);font-weight:bold">87.00</div>
<div class="t d" style="left:418.85px;top:325.58px;font-size:6.76px;color:#111;transform:scaleX(0.9930);font-weight:bold">100.00</div>
<div class="t d" style="left:492.05px;top:325.58px;font-size:6.76px;color:#111;transform:scaleX(1.0183);font-weight:bold">40.00</div>
<div class="t d" style="left:573.45px;top:325.58px;font-size:6.76px;color:#111;transform:scaleX(1.0183);font-weight:bold">81.00</div>
<div class="t d" style="left:418.85px;top:341.58px;font-size:6.76px;color:#111;transform:scaleX(0.9930);font-weight:bold">100.00</div>
<div class="t d" style="left:492.05px;top:341.58px;font-size:6.76px;color:#111;transform:scaleX(1.0183);font-weight:bold">40.00</div>
<div class="t d" style="left:573.45px;top:341.58px;font-size:6.76px;color:#111;transform:scaleX(1.0183);font-weight:bold">85.00</div>
</div><!--/DOC-->
  </div>
  <div class="a" id="panel">
<div class="t" id="p_print" style="left:24.3px;top:20.9px;font-size:15.5px;color:#202124;transform:scaleX(1.035);transform-origin:0 0">Print</div>
<div class="t" id="p_1page" style="right:25.400px;top:22.400px;font-size:13px;color:#202124;-webkit-text-stroke:.35px #202124;transform:scaleX(.95);transform-origin:100% 0">1 page</div>
<div class="t" id="p_dest" style="left:24.3px;top:77px;font-size:13px;color:#202124">Destination</div>
<div class="t" id="p_pages" style="left:24.3px;top:130.8px;font-size:13px;color:#202124;transform:scaleX(0.968);transform-origin:0 0">Pages</div>
<div class="t" id="p_layout" style="left:24.3px;top:185.2px;font-size:13px;color:#202124;transform:scaleX(0.979);transform-origin:0 0">Layout</div>
<div class="a" style="left:168px;top:68px;width:192px;height:32px;background:#f1f3f4;border-radius:4px"></div>
<div class="a" style="left:168px;top:122px;width:192px;height:32px;background:#f1f3f4;border-radius:4px"></div>
<div class="a" style="left:166px;top:174px;width:196px;height:36px;background:#f1f3f4;border:2px solid #a6c5fa;border-radius:6px"></div>
<svg class="a" style="left:175px;top:75.500px" width="14" height="17" viewBox="0 0 14 17"><path d="M1.800 0H9l5 5v10.200c0 1-.8 1.800-1.800 1.800H1.800C.8 17 0 16.200 0 15.200V1.800C0 .8.800 0 1.800 0z" fill="#80868b"/><path d="M8.300 1.200v4.500h4.500z" fill="#f1f3f4"/></svg>
<div class="t" id="p_pdf" style="left:200px;top:77px;font-size:13px;color:#202124;transform:scaleX(0.938);transform-origin:0 0">Save as PDF</div>
<div class="t" id="p_all" style="left:176.2px;top:130.8px;font-size:13px;color:#202124">All</div>
<div class="t" id="p_port" style="left:176.2px;top:185.2px;font-size:13px;color:#202124;transform:scaleX(1.02);transform-origin:0 0">Portrait</div>
<svg class="a" style="left:342.300px;top:82.3px" width="10.400" height="5.300" viewBox="0 0 10.400 5.300"><path d="M0 0h10.400L5.200 5.300z" fill="#55585c"/></svg>
<svg class="a" style="left:342.300px;top:135.9px" width="10.400" height="5.300" viewBox="0 0 10.400 5.300"><path d="M0 0h10.400L5.200 5.300z" fill="#55585c"/></svg>
<svg class="a" style="left:342.300px;top:190px" width="10.400" height="5.300" viewBox="0 0 10.400 5.300"><path d="M0 0h10.400L5.200 5.300z" fill="#55585c"/></svg>
<div class="a" style="left:0;top:227px;width:385px;height:1px;background:#e3e3e3"></div>
<div class="t" id="p_more" style="left:24.3px;top:246.1px;font-size:13px;color:#202124;transform:scaleX(1.012);transform-origin:0 0">More settings</div>
<svg class="a" style="left:342px;top:248px" width="12" height="8" viewBox="0 0 12 8"><path d="M1.300 1.500L6 6.200l4.700-4.700" fill="none" stroke="#3c4043" stroke-width="1.700"/></svg>
<div class="a" style="left:219px;top:609px;width:67px;height:32px;background:#1a73e8;border-radius:4px"></div>
<div class="t" id="p_save" style="left:239px;top:618.200px;font-size:13px;color:#fff;-webkit-text-stroke:.4px #fff;transform:scaleX(.945);transform-origin:0 0">Save</div>
<div class="a" style="left:294px;top:609px;width:74px;height:32px;background:#fff;border:1px solid #dadce0;border-radius:4px"></div>
<div class="t" id="p_cancel" style="left:311.700px;top:618.200px;font-size:13px;color:#1a73e8;-webkit-text-stroke:.3px #1a73e8;transform:scaleX(.976);transform-origin:0 0">Cancel</div>
</div>
</div>

</body></html>
